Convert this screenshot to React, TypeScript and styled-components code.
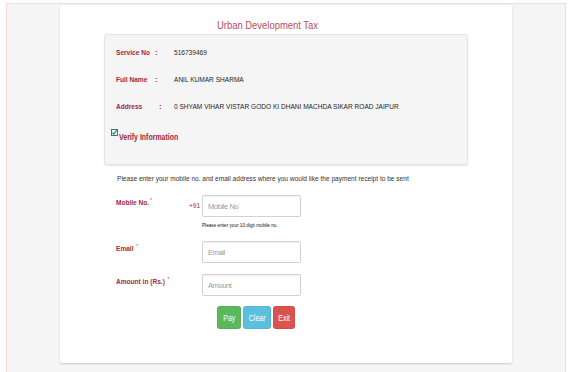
import styled, { createGlobalStyle } from 'styled-components';

const GlobalStyle = createGlobalStyle`
  html, body {
    margin: 0;
    padding: 0;
    background: #ffffff;
    font-family: "Liberation Sans", Arial, sans-serif;
    color: #333333;
  }
`;

// the page text is set in a narrow face; squeeze the regular one to match
const Condensed = styled.span`
  display: inline-block;
  white-space: nowrap;
  transform: scaleX(0.82);
  transform-origin: 0 50%;
`;

const Page = styled.div`
  box-sizing: border-box;
  margin: 3px 0 0 6px;
  width: 560px;
  height: 369px;
  border: 1px solid #f2dada;
  border-bottom: none;
  background: #f5f5f5;
  padding-top: 1px;
`;

const Card = styled.div`
  margin-left: 53px;
  width: 452px;
  height: 358px;
  background: #ffffff;
  border-radius: 2px;
  box-shadow: 0 1px 2px rgba(0, 0, 0, 0.18);
  box-sizing: border-box;
  padding-top: 13px;
`;

const Title = styled.h1`
  margin: 0 0 2px 0;
  padding-left: 157px;
  font-size: 11.5px;
  line-height: 14px;
  font-weight: normal;
  color: #b64d62;
`;

const Well = styled.div`
  margin-left: 44px;
  width: 364px;
  height: 131px;
  box-sizing: border-box;
  background: #f5f5f5;
  border: 1px solid #e4e4e4;
  border-radius: 3px;
  box-shadow: 0 1px 2px rgba(0, 0, 0, 0.1);
  padding: 4px 0 0 11px;
`;

const InfoRow = styled.div`
  display: flex;
  height: 27px;
  align-items: center;
  font-size: 8px;
`;

const InfoLabel = styled.span`
  display: flex;
  width: 58px;
  flex: none;
  font-weight: bold;
  color: #a3283d;
`;

const InfoName = styled.span<{ w: number }>`
  width: ${p => p.w}px;
`;

const InfoValue = styled.span`
  color: #1e1e1e;
`;

const VerifyRow = styled.label`
  display: flex;
  align-items: center;
  margin: 9px 0 0 -5px;
  font-size: 8.5px;
  font-weight: bold;
  color: #a3283d;
`;

const CheckBox = styled.span`
  position: relative;
  width: 5px;
  height: 5px;
  border: 1px solid #3a6aa6;
  background: #ffffff;
  margin: 0 1px 8px 0;
  flex: none;

  svg {
    position: absolute;
    left: -1px;
    top: -1px;
  }
`;

const Note = styled.p`
  margin: 8px 0 0 57px;
  font-size: 8px;
  line-height: 12px;
  color: #333333;
`;

const Form = styled.div`
  padding: 10px 0 0 56px;
`;

const FormRow = styled.div<{ gap: number }>`
  display: grid;
  grid-template-columns: 73px 13px 99px;
  margin-bottom: ${p => p.gap}px;
`;

const FieldLabel = styled.span`
  font-size: 8px;
  font-weight: bold;
  color: #a3283d;
  padding-top: 2px;
`;

const Star = styled.sup`
  font-size: 6px;
  font-weight: normal;
  color: #c0392b;
  vertical-align: 3px;
  margin-left: 1px;
`;

const Prefix = styled.span`
  font-size: 8px;
  color: #a3283d;
  line-height: 22px;
`;

const Field = styled.div`
  display: flex;
  flex-direction: column;
`;

const Input = styled.input`
  box-sizing: border-box;
  width: 99px;
  height: 22px;
  padding: 0 5px;
  font-family: inherit;
  font-size: 7.5px;
  letter-spacing: -0.4px;
  color: #555555;
  border: 1px solid #d2d2d2;
  border-radius: 2px;
  box-shadow: inset 0 1px 1px rgba(0, 0, 0, 0.06);
  outline: none;

  &::placeholder {
    color: #9a9a9a;
  }
`;

const Hint = styled.span`
  font-size: 5.7px;
  line-height: 8px;
  margin-top: 4px;
  color: #111111;
`;

const Actions = styled.div`
  display: flex;
  gap: 2px;
  margin-left: 101px;
`;

const Button = styled.button<{ tone: string; w: number }>`
  width: ${p => p.w}px;
  height: 23px;
  padding: 0;
  font-family: inherit;
  font-size: 8.5px;
  color: #ffffff;
  background: ${p => p.tone};
  border: 1px solid rgba(0, 0, 0, 0.05);
  border-radius: 3px;
`;

const ButtonText = styled(Condensed)`
  transform-origin: 50% 50%;
`;

const infoRows = [
  { label: 'Service No', nameWidth: 39, value: '516739469' },
  { label: 'Full Name', nameWidth: 39, value: 'ANIL KUMAR SHARMA' },
  { label: 'Address', nameWidth: 43, value: '0 SHYAM VIHAR VISTAR GODO KI DHANI MACHDA SIKAR ROAD JAIPUR' },
];

export default function App() {
  return (
    <>
      <GlobalStyle />
      <Page>
        <Card>
          <Title>
            <Condensed>Urban Development Tax</Condensed>
          </Title>
          <Well>
            {infoRows.map(row => (
              <InfoRow key={row.label}>
                <InfoLabel>
                  <InfoName w={row.nameWidth}>
                    <Condensed>{row.label}</Condensed>
                  </InfoName>
                  <span>:</span>
                </InfoLabel>
                <InfoValue>
                  <Condensed>{row.value}</Condensed>
                </InfoValue>
              </InfoRow>
            ))}
            <VerifyRow>
              <CheckBox>
                <svg width="7" height="7" viewBox="0 0 7 7">
                  <path d="M1.4 3.6 L2.8 5.2 L5.8 1.2" fill="none" stroke="#2e9e3a" strokeWidth="1.3" />
                </svg>
              </CheckBox>
              <Condensed>Verify Information</Condensed>
            </VerifyRow>
          </Well>
          <Note>
            <Condensed>
              Please enter your mobile no. and email address where you would like the payment receipt to be sent
            </Condensed>
          </Note>
          <Form>
            <FormRow gap={12}>
              <FieldLabel>
                <Condensed>
                  Mobile No.<Star>*</Star>
                </Condensed>
              </FieldLabel>
              <Prefix>
                <Condensed>+91</Condensed>
              </Prefix>
              <Field>
                <Input placeholder="Mobile No" />
                <Hint>
                  <Condensed>Please enter your 10 digit mobile no.</Condensed>
                </Hint>
              </Field>
            </FormRow>
            <FormRow gap={11}>
              <FieldLabel>
                <Condensed>
                  Email <Star>*</Star>
                </Condensed>
              </FieldLabel>
              <span />
              <Input placeholder="Email" />
            </FormRow>
            <FormRow gap={10}>
              <FieldLabel>
                <Condensed>
                  Amount in (Rs.) <Star>*</Star>
                </Condensed>
              </FieldLabel>
              <span />
              <Input placeholder="Amount" />
            </FormRow>
            <Actions>
              <Button tone="#5cb85c" w={24}>
                <ButtonText>Pay</ButtonText>
              </Button>
              <Button tone="#5bc0de" w={28}>
                <ButtonText>Clear</ButtonText>
              </Button>
              <Button tone="#d9534f" w={22}>
                <ButtonText>Exit</ButtonText>
              </Button>
            </Actions>
          </Form>
        </Card>
      </Page>
    </>
  );
}
